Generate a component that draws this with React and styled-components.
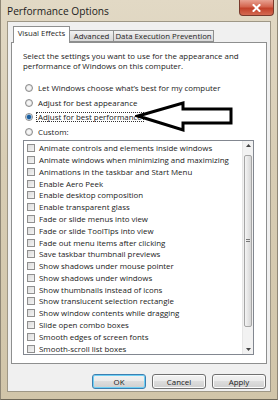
import React from "react";
import styled, { createGlobalStyle } from "styled-components";

const Global = createGlobalStyle`
  html, body { margin: 0; padding: 0; background: #fff; }
  body { font-family: "Open Sans", "Noto Sans", sans-serif; }
`;

const Window = styled.div`
  position: relative;
  width: 278px;
  height: 400px;
  box-sizing: border-box;
  display: flex;
  flex-direction: column;
  padding: 0 6px 7px 6px;
  background: linear-gradient(180deg, #e2d9c5 0%, #d8cdb4 40%, #d1c5a9 100%);
  border-left: 1px solid #8f8776;
  border-right: 1px solid #8f8776;
  border-bottom: 1px solid #6f6858;
`;

const TitleBar = styled.div`
  height: 21px;
  margin: 0 -6px;
  padding-left: 6px;
  display: flex;
  align-items: center;
  justify-content: space-between;
`;

const Title = styled.span`
  font-family: "Open Sans", sans-serif;
  font-size: 10.2px;
  color: #1c1c1c;
  margin-top: 1px;
`;

const CloseBtn = styled.div`
  align-self: flex-start;
  width: 35px;
  height: 16px;
  margin-right: 3px;
  box-sizing: border-box;
  border: 1px solid #7a3a2c;
  border-top: none;
  border-radius: 0 0 4px 4px;
  background: linear-gradient(180deg, #e8a191 0%, #d4654f 45%, #c2412a 55%, #d46a52 100%);
  display: flex;
  align-items: center;
  justify-content: center;
`;

const Client = styled.div`
  flex: 1;
  display: flex;
  flex-direction: column;
  background: #f0f0f0;
  border: 1px solid #9e9786;
  padding: 4px 3px 5px 3px;
  min-height: 0;
`;

const TabStrip = styled.div`
  display: flex;
  align-items: flex-end;
  height: 16px;
  padding-left: 2px;
  position: relative;
  z-index: 1;
`;

const Tab = styled.div`
  box-sizing: border-box;
  width: ${(p) => p.$w}px;
  height: ${(p) => (p.$active ? "17px" : "12px")};
  margin-bottom: ${(p) => (p.$active ? "-1px" : "0")};
  margin-left: ${(p) => (p.$active ? "0" : "-1px")};
  padding-top: ${(p) => (p.$active ? "2px" : "1px")};
  border: 1px solid #8e8f8f;
  border-bottom: ${(p) => (p.$active ? "none" : "1px solid #8e8f8f")};
  background: ${(p) => (p.$active ? "#ffffff" : "linear-gradient(180deg, #f2f2f2 0%, #e3e3e3 50%, #d9d9d9 100%)")};
  font-size: 7.8px;
  line-height: 9px;
  text-align: center;
  color: #1e1e1e;
  white-space: nowrap;
`;

const Panel = styled.div`
  box-sizing: border-box;
  height: 322px;
  background: #ffffff;
  border: 1px solid #8e8f8f;
  padding: 8px 12px 8px 11px;
  display: flex;
  flex-direction: column;
`;

const Intro = styled.p`
  margin: 0;
  font-size: 7.9px;
  line-height: 10px;
  color: #222;
`;

const RadioList = styled.div`
  display: flex;
  flex-direction: column;
  margin-top: 10px;
  margin-left: 2px;
`;

const RadioRow = styled.div`
  display: flex;
  align-items: center;
  height: 14.6px;
  font-size: 7.9px;
  color: #222;
`;

const RadioDot = styled.span`
  box-sizing: border-box;
  width: 8px;
  height: 8px;
  border-radius: 50%;
  border: 1px solid #8b8b8b;
  background: ${(p) =>
    p.$on
      ? "radial-gradient(circle, #1d5f9e 0 1.6px, #5b9bd5 2.3px, #e9eef3 2.8px)"
      : "radial-gradient(circle, #f6f6f6 0 1.5px, #dcdcdc 3px)"};
  margin-right: 3px;
  flex: none;
`;

const RadioLabel = styled.span`
  padding: 0 1px;
  border: 1px dotted ${(p) => (p.$focus ? "#333" : "transparent")};
  line-height: 8px;
`;

const ListBox = styled.div`
  box-sizing: border-box;
  margin-top: 1px;
  height: 215px;
  border: 1px solid #828790;
  display: flex;
  background: #fff;
`;

const Items = styled.div`
  flex: 1;
  padding: 1px 0 0 3px;
  display: flex;
  flex-direction: column;
`;

const Item = styled.div`
  height: 11.8px;
  display: flex;
  align-items: center;
  font-size: 7.9px;
  color: #222;
  white-space: nowrap;
`;

const Check = styled.span`
  box-sizing: border-box;
  width: 8px;
  height: 8px;
  border: 1px solid #8f8f8f;
  background: linear-gradient(135deg, #dcdcdc 0%, #f4f4f4 100%);
  margin-right: 4px;
  flex: none;
`;

const ScrollBar = styled.div`
  width: 10px;
  display: flex;
  flex-direction: column;
  background: #f2f2f2;
  border-left: 1px solid #e6e6e6;
`;

const ScrollArrow = styled.div`
  height: 9px;
  display: flex;
  align-items: center;
  justify-content: center;
`;

const Track = styled.div`
  flex: 1;
  display: flex;
  flex-direction: column;
  padding: 5px 0 18px 0;
`;

const Thumb = styled.div`
  flex: 1;
  margin: 0 1px;
  border: 1px solid #a5a5a5;
  border-radius: 2px;
  background: linear-gradient(90deg, #f4f4f4 0%, #e2e2e2 60%, #d6d6d6 100%);
  display: flex;
  align-items: center;
  justify-content: center;
`;

const Grip = styled.div`
  width: 4px;
  height: 4px;
  background: repeating-linear-gradient(180deg, #777 0 1px, transparent 1px 2px);
`;

const ButtonRow = styled.div`
  display: flex;
  justify-content: flex-end;
  gap: 6px;
  margin-top: 10px;
  padding-right: 1px;
`;

const Button = styled.div`
  box-sizing: border-box;
  width: 54px;
  height: 15px;
  border: 1px solid ${(p) => (p.$default ? "#3c7fb1" : "#707070")};
  border-radius: 3px;
  background: linear-gradient(180deg, #f2f2f2 0%, #ebebeb 45%, #dddddd 50%, #cfcfcf 100%);
  box-shadow: ${(p) => (p.$default ? "inset 0 0 0 1px #6fd0f5" : "inset 0 0 0 1px #fcfcfc")};
  font-size: 7.9px;
  color: #222;
  display: flex;
  align-items: center;
  justify-content: center;
`;

const Arrow = styled.svg`
  position: absolute;
  left: 134px;
  top: 100px;
`;

const radios = [
  { label: "Let Windows choose what’s best for my computer" },
  { label: "Adjust for best appearance" },
  { label: "Adjust for best performance", on: true },
  { label: "Custom:" },
];

const items = [
  "Animate controls and elements inside windows",
  "Animate windows when minimizing and maximizing",
  "Animations in the taskbar and Start Menu",
  "Enable Aero Peek",
  "Enable desktop composition",
  "Enable transparent glass",
  "Fade or slide menus into view",
  "Fade or slide ToolTips into view",
  "Fade out menu items after clicking",
  "Save taskbar thumbnail previews",
  "Show shadows under mouse pointer",
  "Show shadows under windows",
  "Show thumbnails instead of icons",
  "Show translucent selection rectangle",
  "Show window contents while dragging",
  "Slide open combo boxes",
  "Smooth edges of screen fonts",
  "Smooth-scroll list boxes",
];

export default function App() {
  return (
    <>
      <Global />
      <Window>
        <TitleBar>
          <Title>Performance Options</Title>
          <CloseBtn>
            <svg width="9" height="8" viewBox="0 0 9 8">
              <path d="M1.5 1 L7.5 7 M7.5 1 L1.5 7" stroke="#fff" strokeWidth="2" strokeLinecap="square" />
            </svg>
          </CloseBtn>
        </TitleBar>
        <Client>
          <TabStrip>
            <Tab $active $w={57}>Visual Effects</Tab>
            <Tab $w={45}>Advanced</Tab>
            <Tab $w={101}>Data Execution Prevention</Tab>
          </TabStrip>
          <Panel>
            <Intro>
              Select the settings you want to use for the appearance and
              <br />
              performance of Windows on this computer.
            </Intro>
            <RadioList>
              {radios.map((r) => (
                <RadioRow key={r.label}>
                  <RadioDot $on={r.on} />
                  <RadioLabel $focus={r.on}>{r.label}</RadioLabel>
                </RadioRow>
              ))}
            </RadioList>
            <ListBox>
              <Items>
                {items.map((t) => (
                  <Item key={t}>
                    <Check />
                    {t}
                  </Item>
                ))}
              </Items>
              <ScrollBar>
                <ScrollArrow>
                  <svg width="5" height="3" viewBox="0 0 5 3"><path d="M0 3 L2.5 0 L5 3 Z" fill="#444" /></svg>
                </ScrollArrow>
                <Track>
                  <Thumb>
                    <Grip />
                  </Thumb>
                </Track>
                <ScrollArrow>
                  <svg width="5" height="3" viewBox="0 0 5 3"><path d="M0 0 L5 0 L2.5 3 Z" fill="#444" /></svg>
                </ScrollArrow>
              </ScrollBar>
            </ListBox>
          </Panel>
          <ButtonRow>
            <Button $default>OK</Button>
            <Button>Cancel</Button>
            <Button>Apply</Button>
          </ButtonRow>
        </Client>
        <Arrow width="100" height="34" viewBox="0 0 100 34">
          <path
            d="M3 16 L48 3 L48 9 L96 9 L96 23 L48 23 L48 30 Z"
            fill="#fff"
            stroke="#000"
            strokeWidth="3"
            strokeLinejoin="miter"
          />
        </Arrow>
      </Window>
    </>
  );
}
